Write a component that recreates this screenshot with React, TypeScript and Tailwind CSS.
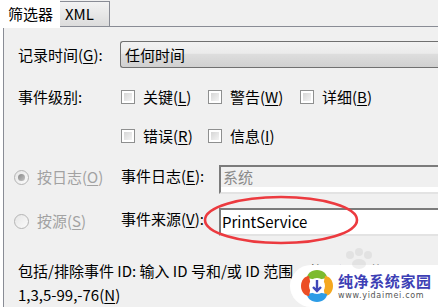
import React from "react";

const font = "font-['Noto_Sans_CJK_SC',sans-serif]";

function Key({ k }: { k: string }) {
  return <span className="underline underline-offset-2 decoration-1">{k}</span>;
}

function Check({ label, k }: { label: string; k: string }) {
  return (
    <div className="flex items-center h-5">
      <div className="w-[14px] h-[14px] border border-[#8e8f8f] bg-white p-[2px]">
        <div className="w-full h-full bg-gradient-to-br from-[#d6d6d6] to-[#f4f4f4]" />
      </div>
      <span className="ml-[8px] text-[15px] leading-5">
        {label}(<Key k={k} />)
      </span>
    </div>
  );
}

function Radio({ checked, label, k }: { checked?: boolean; label: string; k: string }) {
  return (
    <div className="flex items-center">
      <div className="w-[15px] h-[15px] rounded-full border border-[#b4b4b4] bg-gradient-to-br from-[#e6e6e6] to-[#fbfbfb] flex items-center justify-center">
        {checked && <div className="w-[7px] h-[7px] rounded-full bg-gradient-to-br from-[#8a8a8a] to-[#c4c4c4]" />}
      </div>
      <span className="ml-[8px] text-[15px] leading-5 text-[#a2a2a2]">
        {label}(<Key k={k} />)
      </span>
    </div>
  );
}

function Watermark() {
  return (
    <div className="absolute right-0 bottom-0 w-[148px] h-[42px] bg-white rounded-l-[22px] flex items-center pl-[10px] whitespace-nowrap">
      <div className="absolute left-[52px] -top-[18px] opacity-[0.15]">
        <svg width="34" height="22" viewBox="0 0 34 22">
          <circle cx="8" cy="8" r="4" fill="#999" />
          <circle cx="17" cy="5" r="4" fill="#999" />
          <circle cx="26" cy="8" r="4" fill="#999" />
          <ellipse cx="17" cy="17" rx="7" ry="5" fill="#999" />
        </svg>
      </div>
      <svg width="34" height="34" viewBox="0 0 34 34" className="shrink-0">
        <path d="M17 1 C23 1 27 5 27 9 L17 11 L7 9 C7 5 11 1 17 1Z" fill="#7dbb2e" />
        <path d="M33 17 C33 23 29 27 25 27 L23 17 L25 7 C29 7 33 11 33 17Z" fill="#f5a81f" />
        <path d="M17 33 C11 33 7 29 7 25 L17 23 L27 25 C27 29 23 33 17 33Z" fill="#2d9ce6" />
        <path d="M1 17 C1 11 5 7 9 7 L11 17 L9 27 C5 27 1 23 1 17Z" fill="#ec4e25" />
        <circle cx="17" cy="17" r="8" fill="#fff" />
        <path d="M17 11 V21 M13 18 L17 22 L21 18" stroke="#3e46b8" strokeWidth="2.4" fill="none" />
      </svg>
      <div className="ml-[4px] flex flex-col">
        <span className="text-[15px] leading-[20px] font-bold text-[#3d3fb5] tracking-[0.6px]">纯净系统家园</span>
        <span className="font-['DejaVu_Sans',sans-serif] text-[8px] leading-[10px] text-[#555] tracking-[0.7px]">www.yidaimei.com</span>
      </div>
    </div>
  );
}

export default function App() {
  return (
    <div className={`relative w-[438px] h-[307px] overflow-hidden bg-[#f0f0f0] text-black ${font}`}>
      {/* tabs */}
      <div className="flex items-start h-[27px] border-b border-[#898c95]">
        <div className="w-[60px] h-[28px] bg-white flex items-center pl-[8px] text-[15px] leading-5 relative z-10">
          筛选器
        </div>
        <div className="mt-[1px] w-[50px] h-[26px] border border-[#898c95] border-l-0 bg-gradient-to-b from-[#f3f3f3] to-[#dcdcdc] flex items-center pl-[5px] text-[15px] leading-5">
          XML
        </div>
      </div>

      <div className="flex h-[280px]">
        <div className="w-[3px] bg-white" />
        <div className="flex-1 border-l border-[#898c95] pt-[14px] pl-[14px]">
          {/* 记录时间 */}
          <div className="flex items-center h-[27px]">
            <div className="w-[102px] text-[15px] leading-5">
              记录时间(<Key k="G" />):
            </div>
            <div className="flex-1 h-[27px] -mr-[4px] rounded-l-[3px] border border-[#707070] border-r-0 bg-[linear-gradient(#f2f2f2_0%,#ebebeb_45%,#dddddd_50%,#d0d0d0_100%)] flex items-center pl-[4px] text-[15px] leading-5">
              任何时间
            </div>
          </div>

          {/* 事件级别 */}
          <div className="flex mt-[19px]">
            <div className="w-[103px] text-[15px] leading-5">事件级别:</div>
            <div className="flex flex-col gap-[19px]">
              <div className="flex gap-[15px]">
                <div className="w-[72px]"><Check label="关键" k="L" /></div>
                <div className="w-[77px]"><Check label="警告" k="W" /></div>
                <Check label="详细" k="B" />
              </div>
              <div className="flex gap-[15px]">
                <div className="w-[72px]"><Check label="错误" k="R" /></div>
                <Check label="信息" k="I" />
              </div>
            </div>
          </div>

          {/* 按日志 */}
          <div className="flex items-start mt-[19px] -ml-[4px]">
            <div className="w-[107px] mt-[2px]"><Radio checked label="按日志" k="O" /></div>
            <div className="w-[98px] text-[15px] leading-5 mt-[1px]">
              事件日志(<Key k="E" />):
            </div>
            <div className="flex-1 h-[29px] flex flex-col border-2 border-r-0 border-t-[#7b7b7b] border-l-[#7b7b7b] border-b-[#e3e3e3]">
              <div className="h-[20px] bg-[#f0f0f0] pl-[2px] text-[15px] leading-5 text-[#8a8a8a]">系统</div>
              <div className="flex-1 bg-white" />
            </div>
          </div>

          {/* 按源 */}
          <div className="flex items-start mt-[14px] -ml-[4px]">
            <div className="w-[107px] mt-[3px]"><Radio label="按源" k="S" /></div>
            <div className="w-[98px] text-[15px] leading-5 mt-[1px]">
              事件来源(<Key k="V" />):
            </div>
            <div className="flex-1 h-[28px] bg-white border-2 border-r-0 border-t-[#7b7b7b] border-l-[#7b7b7b] border-b-[#e3e3e3] flex items-center pl-[1px] text-[15px] leading-5">
              PrintService
            </div>
          </div>

          {/* ID text */}
          <div className="mt-[23px] text-[15px] leading-6 whitespace-nowrap">
            <div>包括/排除事件 ID: 输入 ID 号和/或 ID 范围，使用逗号分隔。</div>
            <div>1,3,5-99,-76(<Key k="N" />)</div>
          </div>
        </div>
      </div>

      {/* red circle annotation */}
      <svg className="absolute left-[202px] top-[194px]" width="160" height="54" viewBox="0 0 160 54">
        <ellipse cx="79" cy="26" rx="76" ry="23" fill="none" stroke="#ec3a3f" strokeWidth="2.6" />
      </svg>

      <Watermark />
    </div>
  );
}
